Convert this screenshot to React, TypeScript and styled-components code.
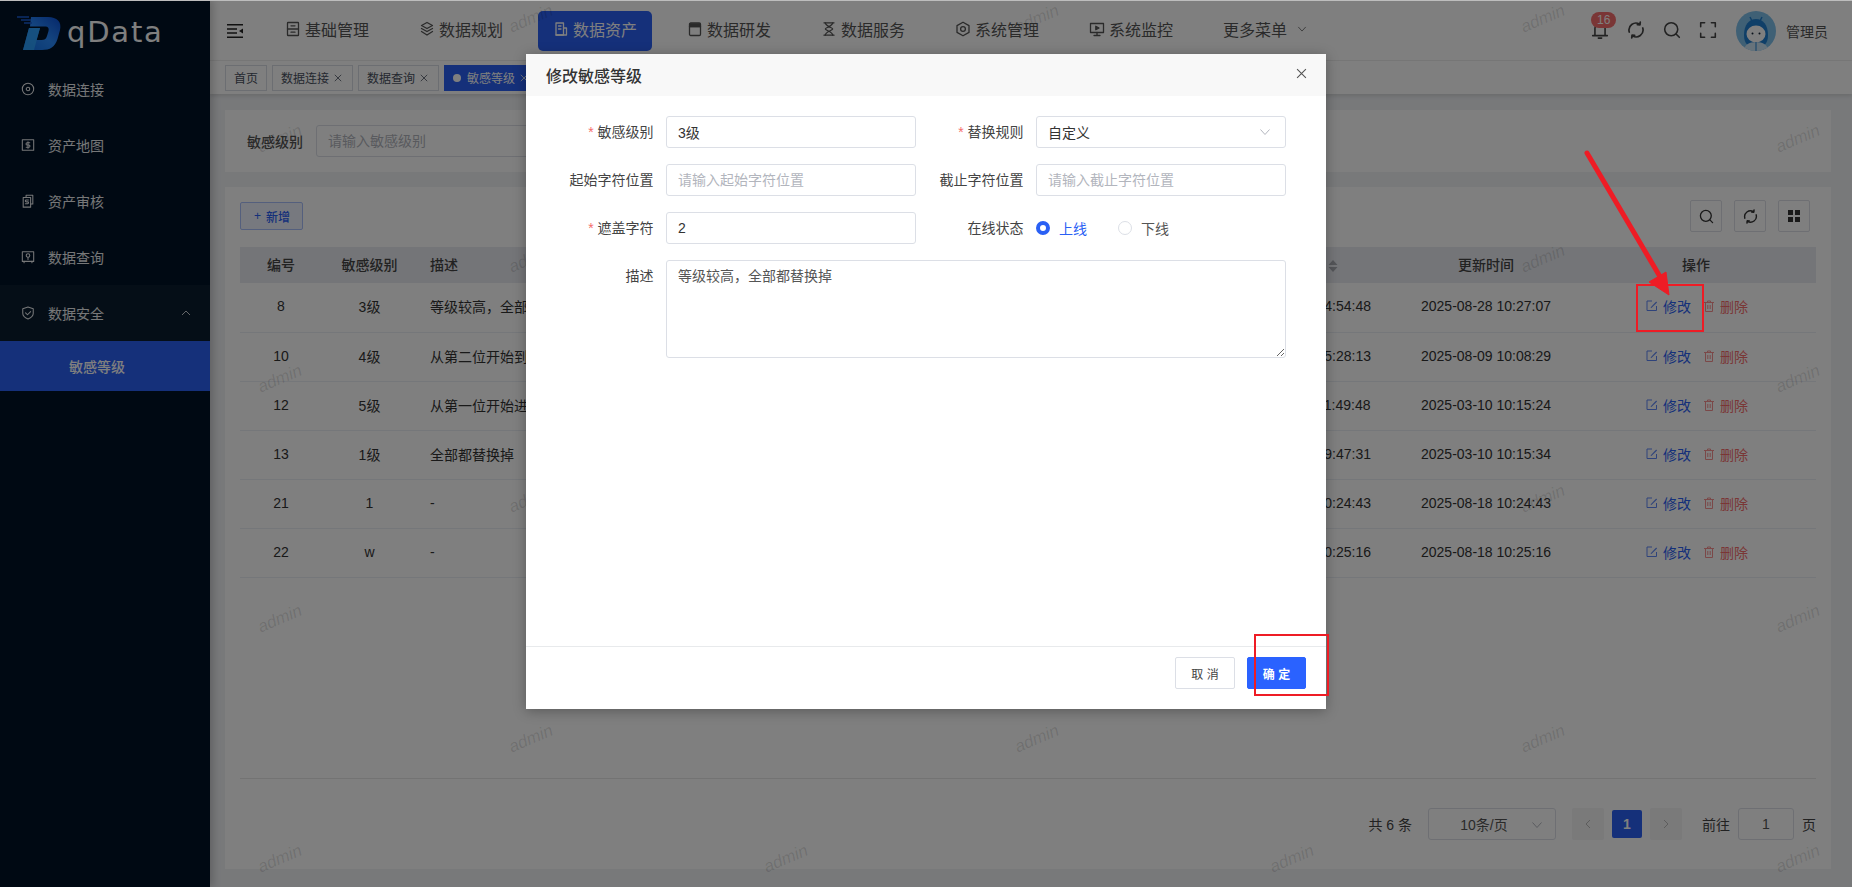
import React from "react"
import styled, { createGlobalStyle } from "styled-components"

const GlobalStyle = createGlobalStyle`
  html, body {
    margin: 0;
    padding: 0;
    height: 100%;
    overflow: hidden;
  }
  body, input, textarea, button {
    font-family: "Liberation Sans", "Noto Sans CJK SC", sans-serif;
  }
  *, *::before, *::after {
    box-sizing: border-box;
  }
`

const Page = styled.div`
  position: relative;
  display: flex;
  width: 1852px;
  height: 887px;
  overflow: hidden;
  background: #f0f2f5;
  color: #333;
  font-size: 14px;
`

/* sidebar */

const Sidebar = styled.aside`
  position: relative;
  z-index: 2;
  flex: 0 0 210px;
  background: #001226;
  box-shadow: 3px 0 8px rgba(0, 0, 0, 0.2);
`

const LogoRow = styled.div`
  display: flex;
  align-items: flex-start;
  height: 61px;
  padding: 16px 0 0 17px;
`

const LogoText = styled.span`
  margin: -3px 0 0 5px;
  color: #fff;
  font-family: "DejaVu Sans", sans-serif;
  font-size: 29px;
  line-height: 38px;
  letter-spacing: 1.8px;
`

const SideItem = styled.div<{ $open?: boolean }>`
  display: flex;
  align-items: center;
  gap: 13px;
  height: 56px;
  padding: 0 20px 0 21px;
  color: #eceef0;
  background: ${(p) => (p.$open ? "#0a1c2f" : "transparent")};

  svg {
    flex: none;
  }
`

const SideArrow = styled.span`
  display: flex;
  margin-left: auto;
  margin-right: -1px;
`

const SideChild = styled.div`
  display: flex;
  align-items: center;
  height: 50px;
  padding-left: 69px;
  color: #fff;
  font-weight: 500;
  background: #2a60f4;
`

/* header */

const Main = styled.div`
  flex: 1;
  min-width: 0;
  display: flex;
  flex-direction: column;
`

const Header = styled.header`
  display: flex;
  align-items: center;
  height: 61px;
  padding: 2px 24px 0 17px;
  background: #fff;
  border-bottom: 1px solid #f0f0f0;
`

const Collapse = styled.span`
  display: flex;
  width: 43px;
  color: #222;
`

const Nav = styled.nav`
  display: flex;
  gap: 20px;
`

const NavItem = styled.div<{ $active?: boolean }>`
  display: flex;
  align-items: center;
  gap: 4px;
  width: 114px;
  height: 40px;
  padding: 0 0 4px 15px;
  border-radius: 5px;
  color: ${(p) => (p.$active ? "#fff" : "#555")};
  background: ${(p) => (p.$active ? "#2a60f4" : "transparent")};
  font-size: 16px;
  white-space: nowrap;
`

const MoreArrow = styled.span`
  display: flex;
  margin-left: 6px;
`

const HeadTools = styled.div`
  display: flex;
  align-items: center;
  margin-left: auto;
  color: #444;
`

const ToolSlot = styled.span`
  position: relative;
  display: flex;
  justify-content: center;
  width: 36px;
  margin-top: -3px;
`

const Badge = styled.span`
  position: absolute;
  top: -9px;
  left: 9px;
  padding: 0 6px;
  height: 16px;
  border-radius: 8px;
  background: #f56c6c;
  color: #fff;
  font-size: 12px;
  line-height: 16px;
`

const Avatar = styled.span`
  display: flex;
  width: 40px;
  height: 40px;
  margin: 0 10px 0 10px;
  border-radius: 50%;
  overflow: hidden;
`

const UserName = styled.span`
  color: #555;
  font-size: 14px;
`

/* tabs */

const TabBar = styled.div`
  display: flex;
  align-items: center;
  gap: 5px;
  height: 33px;
  padding-left: 15px;
  background: #fff;
  box-shadow: 0 2px 4px rgba(0, 0, 0, 0.12);
`

const Tab = styled.div<{ $active?: boolean; $closable?: boolean }>`
  display: flex;
  align-items: center;
  height: 26px;
  padding: 0 ${(p) => (p.$closable ? "10px" : "8px")} 0 8px;
  border: 1px solid ${(p) => (p.$active ? "#2a60f4" : "#d8dce5")};
  color: ${(p) => (p.$active ? "#fff" : "#495060")};
  background: ${(p) => (p.$active ? "#2a60f4" : "#fff")};
  font-size: 12px;
  white-space: nowrap;
`

const TabDot = styled.span`
  width: 8px;
  height: 8px;
  margin-right: 6px;
  border-radius: 50%;
  background: #fff;
`

const TabClose = styled.span`
  display: flex;
  margin-left: 5px;
`

/* content */

const Content = styled.main`
  flex: 1;
  min-height: 0;
  display: flex;
  flex-direction: column;
  gap: 15px;
  padding: 16px 21px 18px 15px;
`

const SearchCard = styled.section`
  display: flex;
  align-items: center;
  gap: 13px;
  height: 62px;
  padding: 0 22px;
  background: #fff;
`

const SearchLabel = styled.label`
  color: #555;
  font-weight: 500;
`

const TextField = styled.input<{ $width?: number }>`
  width: ${(p) => p.$width ?? 250}px;
  height: 32px;
  padding: 0 11px;
  border: 1px solid #dcdfe6;
  border-radius: 3px;
  outline: none;
  background: #fff;
  color: #333;
  font-size: 14px;

  &::placeholder {
    color: #b2b5bd;
    opacity: 1;
  }
`

const TableCard = styled.section`
  flex: 1;
  min-height: 0;
  display: flex;
  flex-direction: column;
  padding: 13px 15px 0;
  background: #fff;
`

const Toolbar = styled.div`
  display: flex;
  align-items: center;
  justify-content: space-between;
  height: 32px;
  margin-bottom: 15px;
`

const AddButton = styled.button`
  display: flex;
  align-items: center;
  gap: 5px;
  height: 28px;
  width: 63px;
  padding: 0 0 0 13px;
  border: 1px solid #a8bffa;
  border-radius: 2px;
  color: #2a60f4;
  background: #eef3ff;
  font-size: 12px;
  font-weight: 500;
`

const ToolButtons = styled.div`
  display: flex;
  gap: 12px;
  margin-right: 6px;
`

const ToolButton = styled.span`
  display: flex;
  align-items: center;
  justify-content: center;
  width: 32px;
  height: 32px;
  border: 1px solid #dcdfe6;
  border-radius: 2px;
  color: #333;
`

const Table = styled.table`
  width: 100%;
  border-collapse: collapse;
  table-layout: fixed;
`

const Th = styled.th<{ $left?: boolean }>`
  height: 36px;
  padding: 0 ${(p) => (p.$left ? "13px" : "0")} 2px;
  background: #e8eaf0;
  color: #444;
  font-weight: 500;
  text-align: ${(p) => (p.$left ? "left" : "center")};
`

const SortTh = styled(Th)`
  padding-right: 6px;
`

const SortMark = styled.span`
  display: inline-flex;
  vertical-align: -2px;
  margin-left: 4px;
`

const Td = styled.td<{ $left?: boolean }>`
  height: 49px;
  padding: 0 ${(p) => (p.$left ? "13px" : "0")} 2px;
  border-bottom: 1px solid #ebeef5;
  color: #333;
  text-align: ${(p) => (p.$left ? "left" : "center")};
  white-space: nowrap;
  overflow: hidden;
`

const OpRow = styled.div`
  display: flex;
  align-items: center;
  justify-content: center;
  gap: 12px;
  padding-left: 2px;
`

const OpLink = styled.span<{ $danger?: boolean }>`
  display: flex;
  align-items: center;
  gap: 5px;
  color: ${(p) => (p.$danger ? "#f56c6c" : "#2a60f4")};
`

const Spacer = styled.div`
  flex: 1;
`

const Pager = styled.footer`
  display: flex;
  align-items: center;
  justify-content: flex-end;
  height: 91px;
  padding-bottom: 1px;
  border-top: 1px solid #e6e6e6;
  color: #444;
  font-size: 14px;
`

const PageSize = styled.div`
  position: relative;
  display: flex;
  align-items: center;
  justify-content: center;
  width: 128px;
  height: 32px;
  margin: 0 16px;
  padding-right: 16px;
  border: 1px solid #dcdfe6;
  border-radius: 3px;
  color: #555;

  svg {
    position: absolute;
    right: 12px;
    top: 10px;
  }
`

const PageArrow = styled.span`
  display: flex;
  align-items: center;
  justify-content: center;
  width: 32px;
  height: 32px;
  border-radius: 2px;
  background: #f4f4f5;
  color: #bbb;
`

const PageNum = styled.span`
  display: flex;
  align-items: center;
  justify-content: center;
  width: 30px;
  height: 28px;
  margin: 0 8px;
  border-radius: 2px;
  background: #2a60f4;
  color: #fff;
  font-weight: 700;
`

const GotoLabel = styled.span`
  margin-left: 20px;
`

const GotoInput = styled.input`
  width: 56px;
  height: 32px;
  margin: 0 8px;
  border: 1px solid #dcdfe6;
  border-radius: 3px;
  outline: none;
  color: #555;
  font-size: 14px;
  text-align: center;
`

/* watermark */

const WatermarkLayer = styled.div`
  position: absolute;
  inset: 0;
  z-index: 3;
  pointer-events: none;
`

const Watermark = styled.span`
  position: absolute;
  width: 60px;
  margin: -12px 0 0 -30px;
  color: rgba(0, 0, 0, 0.13);
  font-family: "Liberation Sans", sans-serif;
  font-size: 17px;
  font-style: italic;
  line-height: 24px;
  text-align: center;
  transform: rotate(-23deg);
`

/* dialog */

const Overlay = styled.div`
  position: absolute;
  inset: 0;
  z-index: 10;
  display: flex;
  justify-content: center;
  padding-top: 53px;
  border-top: 1px solid #bdbdbd;
  background: rgba(0, 0, 0, 0.5);
`

const Dialog = styled.div`
  display: flex;
  flex-direction: column;
  width: 800px;
  height: 655px;
  background: #fff;
  box-shadow: 0 2px 12px rgba(0, 0, 0, 0.3);
`

const DialogHead = styled.div`
  display: flex;
  align-items: center;
  justify-content: space-between;
  height: 42px;
  padding: 0 19px 0 20px;
  background: #f8f8f8;
  color: #333;
  font-size: 16px;
  font-weight: 500;

  svg {
    margin-top: -4px;
    color: #555;
  }
`

const DialogBody = styled.div`
  flex: 1;
  display: grid;
  grid-template-columns: 370px 370px;
  grid-auto-rows: 32px;
  row-gap: 16px;
  align-content: start;
  padding: 20px 20px 0;
`

const Field = styled.div<{ $wide?: boolean }>`
  display: flex;
  align-items: ${(p) => (p.$wide ? "flex-start" : "center")};
  grid-column: ${(p) => (p.$wide ? "1 / span 2" : "auto")};
`

const FieldLabel = styled.label<{ $required?: boolean }>`
  flex: 0 0 120px;
  padding-right: 12.5px;
  color: #444;
  line-height: 32px;
  text-align: right;

  &::before {
    content: ${(p) => (p.$required ? '"* "' : "none")};
    color: #f56c6c;
  }
`

const SelectBox = styled.div`
  display: flex;
  align-items: center;
  justify-content: space-between;
  width: 250px;
  height: 32px;
  padding: 0 14px 0 11px;
  border: 1px solid #dcdfe6;
  border-radius: 3px;
  color: #333;
`

const RadioGroup = styled.div`
  display: flex;
  align-items: center;
  gap: 31px;
`

const Radio = styled.span<{ $on?: boolean }>`
  display: flex;
  align-items: center;
  gap: 9px;
  color: ${(p) => (p.$on ? "#2a60f4" : "#555")};
  white-space: nowrap;

  &::before {
    content: "";
    flex: none;
    width: 14px;
    height: 14px;
    border-radius: 50%;
    border: ${(p) => (p.$on ? "4px solid #2a60f4" : "1px solid #dcdfe6")};
    background: #fff;
  }
`

const Memo = styled.textarea`
  width: 620px;
  height: 98px;
  padding: 5px 11px;
  border: 1px solid #dcdfe6;
  border-radius: 3px;
  outline: none;
  color: #555;
  font-size: 14px;
  line-height: 21px;
`

const DialogFoot = styled.div`
  display: flex;
  justify-content: flex-end;
  gap: 12px;
  height: 63px;
  padding: 10px 20px 0;
  border-top: 1px solid #e8eaec;
`

const FootButton = styled.button<{ $primary?: boolean }>`
  width: ${(p) => (p.$primary ? 59 : 60)}px;
  height: 32px;
  padding: 0;
  border: 1px solid ${(p) => (p.$primary ? "#2a62ff" : "#dcdfe6")};
  border-radius: 2px;
  color: ${(p) => (p.$primary ? "#fff" : "#444")};
  background: ${(p) => (p.$primary ? "#2a62ff" : "#fff")};
  font-size: 12px;
  font-weight: ${(p) => (p.$primary ? 700 : 400)};
`

/* red marks drawn on the screenshot */

const RedBox = styled.div`
  position: absolute;
  z-index: 20;
  border: 2px solid #ee1c25;
  pointer-events: none;
`

const EditMark = styled(RedBox)`
  left: 1636px;
  top: 284px;
  width: 68px;
  height: 48px;
`

const ConfirmMark = styled(RedBox)`
  left: 1254px;
  top: 634px;
  width: 75px;
  height: 62px;
`

const ArrowMark = styled.svg`
  position: absolute;
  z-index: 21;
  left: 1580px;
  top: 148px;
  pointer-events: none;
`

function Ico({ size = 16, weight = 1.3, children }: { size?: number; weight?: number; children: React.ReactNode }) {
  return (
    <svg
      width={size}
      height={size}
      viewBox="0 0 16 16"
      fill="none"
      stroke="currentColor"
      strokeWidth={weight}
      strokeLinecap="round"
      strokeLinejoin="round"
    >
      {children}
    </svg>
  )
}

const ChevronDown = ({ size = 12, color = "#b4b7bf" }: { size?: number; color?: string }) => (
  <svg width={size} height={size} viewBox="0 0 12 12" fill="none" stroke={color} strokeWidth="1">
    <path d="M1.5 3.5 6 8.5l4.5-5" />
  </svg>
)

const CloseIcon = ({ size = 8 }: { size?: number }) => (
  <svg width={size} height={size} viewBox="0 0 10 10" fill="none" stroke="currentColor" strokeWidth="1">
    <path d="M1 1l8 8M9 1 1 9" />
  </svg>
)

const SearchIcon = ({ size = 18 }: { size?: number }) => (
  <Ico size={size} weight={1.4}>
    <circle cx="7.3" cy="7.3" r="5.8" />
    <path d="M11.6 11.6l2.9 2.9" />
  </Ico>
)

const RefreshIcon = ({ size = 18 }: { size?: number }) => (
  <Ico size={size} weight={1.5}>
    <path d="M2 9.800A6.200 6.200 0 0 1 11.200 2.800" />
    <path d="M14 6.200A6.200 6.200 0 0 1 4.800 13.200" />
    <path d="M11.800 1l-.3 2.400-2.300-.2" fill="currentColor" />
    <path d="M4.200 15l.3-2.400 2.300.2" fill="currentColor" />
  </Ico>
)

const navIcons: Record<string, React.ReactNode> = {
  basic: (
    <>
      <rect x="2.5" y="1.5" width="11" height="13" rx="0.6" />
      <path d="M2.5 8h11M6 4.800h4M6 11.200h4" />
    </>
  ),
  plan: (
    <>
      <path d="M8 1.500l5.500 3-5.500 3-5.500-3z" />
      <path d="M2.500 7.500l5.500 3 5.500-3" />
      <path d="M2.500 10.500l5.500 3.500 5.500-3.500" />
    </>
  ),
  asset: (
    <>
      <path d="M3 14V2h7.500v12z" />
      <path d="M10.500 7H13.500v7H3" />
      <path d="M5.500 5h2.500M5.500 8h2.500" />
    </>
  ),
  dev: (
    <>
      <rect x="2.500" y="2" width="11" height="12.500" rx="1.200" />
      <path d="M2.500 5.500h11" />
      <path d="M3 3h10v2.500H3z" fill="currentColor" />
    </>
  ),
  service: (
    <>
      <path d="M3 1.800h10M3 14.200h10" />
      <path d="M4.300 1.800c0 3.400 7.400 4.800 7.400 6.200s-7.400 2.800-7.400 6.200M11.700 1.800c0 3.400-7.400 4.800-7.400 6.200s7.400 2.800 7.400 6.200" />
    </>
  ),
  system: (
    <>
      <path d="M8 1.200l6 3.400v6.800l-6 3.400-6-3.400V4.600z" />
      <circle cx="8" cy="8" r="2.400" />
    </>
  ),
  monitor: (
    <>
      <rect x="1.500" y="2.500" width="13" height="9" />
      <path d="M5 14.500h6M8 11.500v3" />
      <path d="M6.800 5.200 10 7l-3.200 1.800z" fill="currentColor" />
    </>
  ),
}

const sideIcons: Record<string, React.ReactNode> = {
  connect: (
    <>
      <circle cx="8" cy="8" r="6.500" />
      <circle cx="8" cy="8" r="2" />
    </>
  ),
  map: (
    <>
      <rect x="1.500" y="2" width="13" height="12" />
      <path d="M10 5.500H7a1.200 1.200 0 0 0 0 2.500h2a1.200 1.200 0 0 1 0 2.500H6M8 4.200v7.600" />
    </>
  ),
  audit: (
    <>
      <path d="M5.800 4V1.500h7.700v10H11" />
      <rect x="2.500" y="4" width="8.500" height="11" />
      <path d="M8.500 6.800H6a1 1 0 0 0 0 2.200h1.500a1 1 0 0 1 0 2.200H5" />
    </>
  ),
  query: (
    <>
      <rect x="1.500" y="2" width="13" height="11" />
      <circle cx="8" cy="6.200" r="2" />
      <path d="M8 8.200v2.600M3.500 13v1.500M12.500 13v1.500" />
    </>
  ),
  shield: (
    <>
      <path d="M8 1.200l6 2v5.200c0 3.200-2.600 5.200-6 6.400-3.400-1.200-6-3.200-6-6.400V3.200z" />
      <path d="M5.200 7.800 7.400 10l3.600-3.600" />
    </>
  ),
}

const columns = [82, 95, undefined, 180, 180, 240]

const rows = [
  { id: "8", level: "3级", desc: "等级较高，全部都替换掉", created: "2025-03-10 14:54:48", updated: "2025-08-28 10:27:07" },
  { id: "10", level: "4级", desc: "从第二位开始到倒数第二位替换", created: "2025-03-10 15:28:13", updated: "2025-08-09 10:08:29" },
  { id: "12", level: "5级", desc: "从第一位开始进行替换", created: "2025-03-10 11:49:48", updated: "2025-03-10 10:15:24" },
  { id: "13", level: "1级", desc: "全部都替换掉", created: "2025-03-10 09:47:31", updated: "2025-03-10 10:15:34" },
  { id: "21", level: "1", desc: "-", created: "2025-08-18 10:24:43", updated: "2025-08-18 10:24:43" },
  { id: "22", level: "w", desc: "-", created: "2025-08-18 10:25:16", updated: "2025-08-18 10:25:16" },
]

const navItems = [
  { key: "basic", label: "基础管理" },
  { key: "plan", label: "数据规划" },
  { key: "asset", label: "数据资产", active: true },
  { key: "dev", label: "数据研发" },
  { key: "service", label: "数据服务" },
  { key: "system", label: "系统管理" },
  { key: "monitor", label: "系统监控" },
]

const sideItems = [
  { key: "connect", label: "数据连接" },
  { key: "map", label: "资产地图" },
  { key: "audit", label: "资产审核" },
  { key: "query", label: "数据查询" },
]

// staggered grid, every other row shifted by half a step
const marks = Array.from({ length: 8 }).flatMap((_, row) =>
  [0, 1, 2, 3].map((col) => ({
    x: (row % 2 ? 280 : 531) + col * 506,
    y: 19 + row * 120,
  }))
)

function Logo() {
  return (
    <svg width="45" height="34" viewBox="0 0 45 34">
      <defs>
        <linearGradient id="logoBlue" x1="0" y1="1" x2="1" y2="0">
          <stop offset="0" stopColor="#1070e8" />
          <stop offset="0.5" stopColor="#2a8cff" />
          <stop offset="1" stopColor="#0b4fd6" />
        </linearGradient>
      </defs>
      <path
        d="M14 1h17c9 0 14 5 12 13l-2.500 9C38 31 33 34 25 34H6l6-22h11l-3.500 12h5c3 0 4.500-1 5.500-4l1.500-5c.8-3-.5-4.500-3-4.500H13z"
        fill="url(#logoBlue)"
      />
      <path d="M12 12h11l-6 22H6z" fill="#2fa6ff" opacity="0.85" />
      <path d="M0 1h12M4 4h10M7 7h8" stroke="#1a5fd8" strokeWidth="1.4" />
    </svg>
  )
}

function CollapseIcon() {
  return (
    <svg width="16" height="14" viewBox="0 0 16 14" fill="none" stroke="currentColor" strokeWidth="1.4">
      <path d="M0 .8h16M0 13.200h16M0 5h10M0 9h10" />
      <path d="M16 4.500v5L12 7z" fill="currentColor" stroke="none" />
    </svg>
  )
}

function UserAvatar() {
  return (
    <svg width="40" height="40" viewBox="0 0 40 40">
      <rect width="40" height="40" fill="#7fc0ea" />
      <path d="M8 24c0-10 5-16 12-16s12 6 12 16-5 12-12 12S8 34 8 24z" fill="#1f7fd0" />
      <path d="M14 6l2 4M26 6l-2 4" stroke="#1f7fd0" strokeWidth="1.500" />
      <ellipse cx="20" cy="23" rx="9.500" ry="8.500" fill="#fff" />
      <circle cx="16.500" cy="22.500" r="1" fill="#123" />
      <circle cx="23.500" cy="22.500" r="1" fill="#123" />
      <path d="M8 40c0-6 5-9 12-9s12 3 12 9z" fill="#cfe6f6" />
      <path d="M20 31v9" stroke="#1f7fd0" strokeWidth="1" />
    </svg>
  )
}

const EditIcon = () => (
  <svg width="12" height="12" viewBox="0 0 12 12" fill="none" stroke="currentColor" strokeWidth="1" opacity="0.75">
    <path d="M10.500 6v4.500h-9.500v-9.500H6" />
    <path d="M4.500 7.500 10.200 1.500l.9.900L5.400 8z" fill="currentColor" stroke="none" />
  </svg>
)

const TrashIcon = () => (
  <svg width="12" height="12" viewBox="0 0 12 12" fill="none" stroke="currentColor" strokeWidth="1" opacity="0.75">
    <path d="M1 2.500h10M4.500 2.500V1h3v1.500M2.500 2.500v9h7v-9M4.800 5v4M7.200 5v4" />
  </svg>
)

export default function App() {
  return (
    <Page>
      <GlobalStyle />
      <Sidebar>
        <LogoRow>
          <Logo />
          <LogoText>qData</LogoText>
        </LogoRow>
        {sideItems.map((item) => (
          <SideItem key={item.key}>
            <Ico size={14} weight={1.2}>{sideIcons[item.key]}</Ico>
            {item.label}
          </SideItem>
        ))}
        <SideItem $open>
          <Ico size={14} weight={1.2}>{sideIcons.shield}</Ico>
          数据安全
          <SideArrow>
            <svg width="10" height="10" viewBox="0 0 10 10" fill="none" stroke="#c8ccd0" strokeWidth="1">
              <path d="M1 7l4-4 4 4" />
            </svg>
          </SideArrow>
        </SideItem>
        <SideChild>敏感等级</SideChild>
      </Sidebar>

      <Main>
        <Header>
          <Collapse>
            <CollapseIcon />
          </Collapse>
          <Nav>
            {navItems.map((item) => (
              <NavItem key={item.key} $active={item.active}>
                <Ico>{navIcons[item.key]}</Ico>
                {item.label}
              </NavItem>
            ))}
            <NavItem>
              更多菜单
              <MoreArrow>
                <ChevronDown size={10} color="#666" />
              </MoreArrow>
            </NavItem>
          </Nav>
          <HeadTools>
            <ToolSlot>
              <Badge>16</Badge>
              <Ico size={18} weight={1.4}>
                <path d="M3.500 13V6.500a4.500 4.500 0 0 1 9 0V13M1.500 13h13M6.500 15.200h3" />
              </Ico>
            </ToolSlot>
            <ToolSlot>
              <RefreshIcon />
            </ToolSlot>
            <ToolSlot>
              <SearchIcon />
            </ToolSlot>
            <ToolSlot>
              <Ico size={18} weight={1.4}>
                <path d="M1.500 5V1.500H5M11 1.500h3.500V5M14.500 11v3.500H11M5 14.500H1.500V11" />
              </Ico>
            </ToolSlot>
            <Avatar>
              <UserAvatar />
            </Avatar>
            <UserName>管理员</UserName>
          </HeadTools>
        </Header>

        <TabBar>
          <Tab>首页</Tab>
          <Tab $closable>
            数据连接
            <TabClose>
              <CloseIcon />
            </TabClose>
          </Tab>
          <Tab $closable>
            数据查询
            <TabClose>
              <CloseIcon />
            </TabClose>
          </Tab>
          <Tab $active $closable>
            <TabDot />
            敏感等级
            <TabClose>
              <CloseIcon />
            </TabClose>
          </Tab>
        </TabBar>

        <Content>
          <SearchCard>
            <SearchLabel>敏感级别</SearchLabel>
            <TextField $width={215} placeholder="请输入敏感级别" />
          </SearchCard>

          <TableCard>
            <Toolbar>
              <AddButton>
                <span>+</span>新增
              </AddButton>
              <ToolButtons>
                <ToolButton>
                  <SearchIcon size={15} />
                </ToolButton>
                <ToolButton>
                  <RefreshIcon size={15} />
                </ToolButton>
                <ToolButton>
                  <svg width="12" height="12" viewBox="0 0 12 12" fill="currentColor">
                    <rect x="0" y="0" width="5" height="5" />
                    <rect x="7" y="0" width="5" height="5" />
                    <rect x="0" y="7" width="5" height="5" />
                    <rect x="7" y="7" width="5" height="5" />
                  </svg>
                </ToolButton>
              </ToolButtons>
            </Toolbar>

            <Table>
              <colgroup>
                {columns.map((w, i) => (
                  <col key={i} width={w} />
                ))}
              </colgroup>
              <thead>
                <tr>
                  <Th>编号</Th>
                  <Th>敏感级别</Th>
                  <Th $left>描述</Th>
                  <SortTh>
                    创建时间
                    <SortMark>
                      <svg width="10" height="12" viewBox="0 0 10 12" fill="#a8abb2">
                        <path d="M5 0l4.500 5H.5zM5 12 .5 7h9z" />
                      </svg>
                    </SortMark>
                  </SortTh>
                  <Th>更新时间</Th>
                  <Th>操作</Th>
                </tr>
              </thead>
              <tbody>
                {rows.map((row) => (
                  <tr key={row.id}>
                    <Td>{row.id}</Td>
                    <Td>{row.level}</Td>
                    <Td $left>{row.desc}</Td>
                    <Td>{row.created}</Td>
                    <Td>{row.updated}</Td>
                    <Td>
                      <OpRow>
                        <OpLink>
                          <EditIcon />
                          修改
                        </OpLink>
                        <OpLink $danger>
                          <TrashIcon />
                          删除
                        </OpLink>
                      </OpRow>
                    </Td>
                  </tr>
                ))}
              </tbody>
            </Table>

            <Spacer />

            <Pager>
              共 6 条
              <PageSize>
                10条/页
                <ChevronDown />
              </PageSize>
              <PageArrow>
                <svg width="10" height="10" viewBox="0 0 10 10" fill="none" stroke="currentColor">
                  <path d="M7 1 3 5l4 4" />
                </svg>
              </PageArrow>
              <PageNum>1</PageNum>
              <PageArrow>
                <svg width="10" height="10" viewBox="0 0 10 10" fill="none" stroke="currentColor">
                  <path d="M3 1l4 4-4 4" />
                </svg>
              </PageArrow>
              <GotoLabel>前往</GotoLabel>
              <GotoInput defaultValue="1" />页
            </Pager>
          </TableCard>
        </Content>
      </Main>

      <WatermarkLayer>
        {marks.map((m) => (
          <Watermark key={`${m.x}-${m.y}`} style={{ left: m.x, top: m.y }}>
            admin
          </Watermark>
        ))}
      </WatermarkLayer>

      <Overlay>
        <Dialog>
          <DialogHead>
            修改敏感等级
            <CloseIcon size={11} />
          </DialogHead>
          <DialogBody>
            <Field>
              <FieldLabel $required>敏感级别</FieldLabel>
              <TextField defaultValue="3级" />
            </Field>
            <Field>
              <FieldLabel $required>替换规则</FieldLabel>
              <SelectBox>
                自定义
                <ChevronDown />
              </SelectBox>
            </Field>
            <Field>
              <FieldLabel>起始字符位置</FieldLabel>
              <TextField placeholder="请输入起始字符位置" />
            </Field>
            <Field>
              <FieldLabel>截止字符位置</FieldLabel>
              <TextField placeholder="请输入截止字符位置" />
            </Field>
            <Field>
              <FieldLabel $required>遮盖字符</FieldLabel>
              <TextField defaultValue="2" />
            </Field>
            <Field>
              <FieldLabel>在线状态</FieldLabel>
              <RadioGroup>
                <Radio $on>上线</Radio>
                <Radio>下线</Radio>
              </RadioGroup>
            </Field>
            <Field $wide>
              <FieldLabel>描述</FieldLabel>
              <Memo defaultValue="等级较高，全部都替换掉" />
            </Field>
          </DialogBody>
          <DialogFoot>
            <FootButton>取 消</FootButton>
            <FootButton $primary>确 定</FootButton>
          </DialogFoot>
        </Dialog>
      </Overlay>

      <EditMark />
      <ConfirmMark />
      <ArrowMark width="100" height="155" viewBox="0 0 100 155">
        <path d="M7 5 82 132" stroke="#ee1c25" strokeWidth="5" strokeLinecap="round" />
        <path d="M69 134 86 124 89 147z" fill="#ee1c25" stroke="#ee1c25" strokeLinejoin="round" />
      </ArrowMark>
    </Page>
  )
}
